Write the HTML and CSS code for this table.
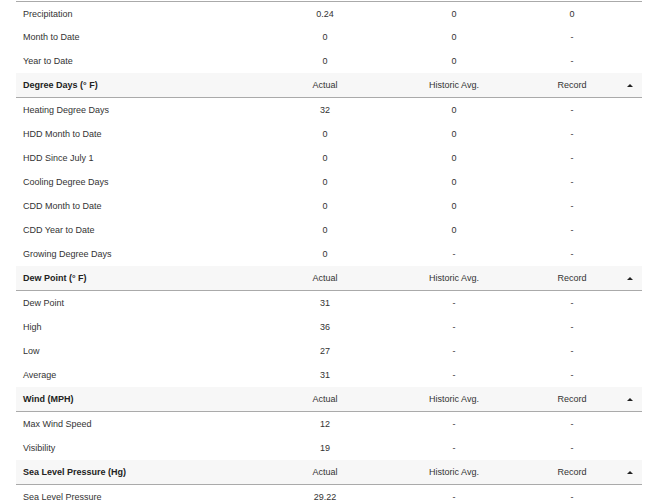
FILE: index.html
```html
<!DOCTYPE html>
<html>
<head>
<meta charset="utf-8">
<link rel="stylesheet" href="styles.css">
</head>
<body>
<div class="history">
  <section class="group group-first">
    <div class="row first"><span class="label">Precipitation</span><span>0.24</span><span>0</span><span>0</span><span></span></div>
    <div class="row"><span class="label">Month to Date</span><span>0</span><span>0</span><span>-</span><span></span></div>
    <div class="row"><span class="label">Year to Date</span><span>0</span><span>0</span><span>-</span><span></span></div>
  </section>
  <section class="group">
    <div class="row head"><span class="label">Degree Days (° F)</span><span>Actual</span><span>Historic Avg.</span><span>Record</span><span class="toggle"><i class="caret"></i></span></div>
    <div class="row"><span class="label">Heating Degree Days</span><span>32</span><span>0</span><span>-</span><span></span></div>
    <div class="row"><span class="label">HDD Month to Date</span><span>0</span><span>0</span><span>-</span><span></span></div>
    <div class="row"><span class="label">HDD Since July 1</span><span>0</span><span>0</span><span>-</span><span></span></div>
    <div class="row"><span class="label">Cooling Degree Days</span><span>0</span><span>0</span><span>-</span><span></span></div>
    <div class="row"><span class="label">CDD Month to Date</span><span>0</span><span>0</span><span>-</span><span></span></div>
    <div class="row"><span class="label">CDD Year to Date</span><span>0</span><span>0</span><span>-</span><span></span></div>
    <div class="row"><span class="label">Growing Degree Days</span><span>0</span><span>-</span><span>-</span><span></span></div>
  </section>
  <section class="group">
    <div class="row head"><span class="label">Dew Point (° F)</span><span>Actual</span><span>Historic Avg.</span><span>Record</span><span class="toggle"><i class="caret"></i></span></div>
    <div class="row"><span class="label">Dew Point</span><span>31</span><span>-</span><span>-</span><span></span></div>
    <div class="row"><span class="label">High</span><span>36</span><span>-</span><span>-</span><span></span></div>
    <div class="row"><span class="label">Low</span><span>27</span><span>-</span><span>-</span><span></span></div>
    <div class="row"><span class="label">Average</span><span>31</span><span>-</span><span>-</span><span></span></div>
  </section>
  <section class="group">
    <div class="row head"><span class="label">Wind (MPH)</span><span>Actual</span><span>Historic Avg.</span><span>Record</span><span class="toggle"><i class="caret"></i></span></div>
    <div class="row"><span class="label">Max Wind Speed</span><span>12</span><span>-</span><span>-</span><span></span></div>
    <div class="row"><span class="label">Visibility</span><span>19</span><span>-</span><span>-</span><span></span></div>
  </section>
  <section class="group">
    <div class="row head"><span class="label">Sea Level Pressure (Hg)</span><span>Actual</span><span>Historic Avg.</span><span>Record</span><span class="toggle"><i class="caret"></i></span></div>
    <div class="row"><span class="label">Sea Level Pressure</span><span>29.22</span><span>-</span><span>-</span><span></span></div>
  </section>
</div>
</body>
</html>
```
FILE: styles.css
```css
html, body {
  margin: 0;
  padding: 0;
  background: #fff;
}
body {
  font-family: "Liberation Sans", Arial, sans-serif;
  font-size: 9px;
  color: #333;
  overflow: hidden;
}
.history {
  width: 626px;
  margin: 1px 0 0 16px;
  border-top: 1px solid #aaa;
}
.row {
  display: grid;
  grid-template-columns: 244px 130px 128px 108px 16px;
  height: 24px;
  align-items: center;
  text-align: center;
}
.row.first {
  height: 23px;
}
.label {
  text-align: left;
  padding-left: 7px;
}
.head {
  background: #f7f7f7;
  border-bottom: 1px solid #aaa;
  color: #333;
}
.head .label {
  font-weight: bold;
  color: #222;
}
.toggle {
  display: flex;
  align-items: center;
  justify-content: flex-start;
  padding-left: 1px;
}
.caret {
  display: block;
  width: 0;
  height: 0;
  border-left: 3px solid transparent;
  border-right: 3px solid transparent;
  border-bottom: 3px solid #222;
}
```
